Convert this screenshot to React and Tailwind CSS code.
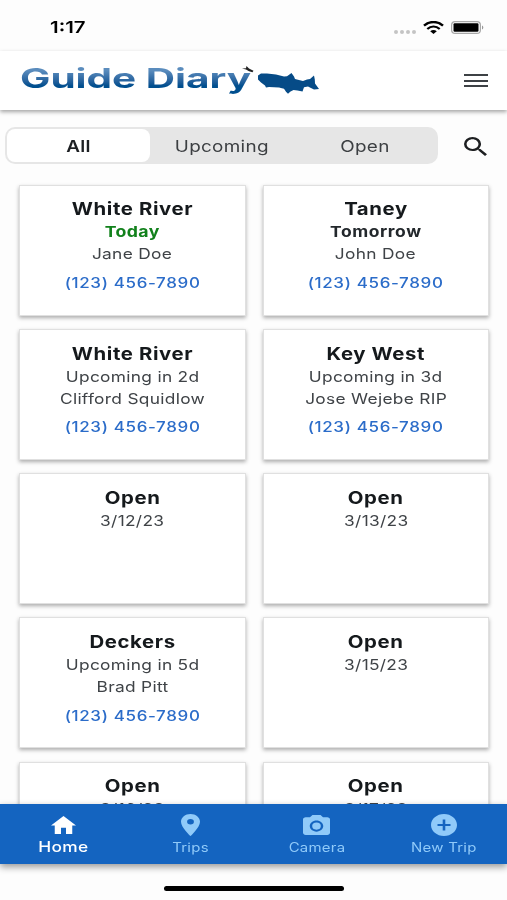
import { useState } from "react"
import clsx from "clsx"

const filters = ["All", "Upcoming", "Open"]

const trips = [
  { title: "White River", when: "Today", name: "Jane Doe", phone: "(123) 456-7890", tone: "today" },
  { title: "Taney", when: "Tomorrow", name: "John Doe", phone: "(123) 456-7890", tone: "tomorrow" },
  { title: "White River", when: "Upcoming in 2d", name: "Clifford Squidlow", phone: "(123) 456-7890" },
  { title: "Key West", when: "Upcoming in 3d", name: "Jose Wejebe RIP", phone: "(123) 456-7890" },
  { title: "Open", when: "3/12/23" },
  { title: "Open", when: "3/13/23" },
  { title: "Deckers", when: "Upcoming in 5d", name: "Brad Pitt", phone: "(123) 456-7890" },
  { title: "Open", when: "3/15/23" },
  { title: "Open", when: "3/16/23" },
  { title: "Open", when: "3/17/23" },
]

const tabs = [
  { label: "Home", box: "2 3 20 17", size: "h-[18px] w-[25px]", path: "M10 20v-6h4v6h5v-8h3L12 3 2 12h3v8z" },
  {
    label: "Trips",
    box: "5 2 14 20",
    size: "h-[22px] w-[19px]",
    path: "M12 2C8.13 2 5 5.13 5 9c0 5.25 7 13 7 13s7-7.75 7-13c0-3.87-3.13-7-7-7zm0 9.5a2.5 2.5 0 0 1 0-5 2.5 2.5 0 0 1 0 5z",
  },
  {
    label: "Camera",
    box: "2 2 20 18",
    size: "h-5 w-[27px]",
    path: "M9 2 7.17 4H4c-1.1 0-2 .9-2 2v12c0 1.1.9 2 2 2h16c1.1 0 2-.9 2-2V6c0-1.1-.9-2-2-2h-3.17L15 2H9zm3 15c-2.76 0-5-2.24-5-5s2.24-5 5-5 5 2.24 5 5-2.24 5-5 5zm0-1.8a3.2 3.2 0 1 0 0-6.4 3.2 3.2 0 0 0 0 6.4z",
  },
  {
    label: "New Trip",
    box: "2 2 20 20",
    size: "h-[22px] w-[26px]",
    path: "M12 2C6.48 2 2 6.48 2 12s4.48 10 10 10 10-4.48 10-10S17.52 2 12 2zm5 11h-4v4h-2v-4H7v-2h4V7h2v4h4v2z",
  },
]

const StatusBar = () => (
  <div className="flex h-[51px] shrink-0 items-center justify-between pt-[3px] pr-[23px] pl-[50px]">
    <span className="origin-left scale-x-[1.24] text-[16.5px] leading-none font-semibold text-black">1:17</span>
    <div className="flex items-center">
      <div className="mt-[9px] mr-[7px] flex gap-[2px]">
        {[0, 1, 2, 3].map((dot) => (
          <span key={dot} className="size-[4px] rounded-full bg-[#c4c4c4]" />
        ))}
      </div>
      <svg className="mr-[7px] h-[13px] w-[21px]" viewBox="0 0 21 13" fill="none" stroke="#000">
        <path d="M1 4.7C6.3-.2 14.7-.2 20 4.7" strokeWidth="2.4" />
        <path d="M4.3 8C8 4.7 13 4.7 16.7 8" strokeWidth="2.3" />
        <path d="M7.2 10.3c2-1.7 4.600-1.7 6.600 0L10.500 13z" fill="#000" stroke="none" />
      </svg>
      <svg className="h-[13px] w-[33px]" viewBox="0 0 33 13" fill="none">
        <rect x="0.6" y="0.6" width="28.8" height="11.8" rx="3.5" stroke="#a8a8a8" strokeWidth="1.2" />
        <rect x="2.5" y="2.3" width="25" height="8.4" rx="1.2" fill="#000" />
        <path d="M31 4.5c1.8.6 1.8 3.4 0 4z" fill="#999" />
      </svg>
    </div>
  </div>
)

const Header = () => (
  <header className="relative z-10 flex h-[59px] shrink-0 items-center justify-between bg-white pr-[19px] pl-[20px] shadow-[0_2px_4px_rgba(0,0,0,0.35)]">
    <div className="relative flex h-full items-center">
      <h1 className="w-[233px] pb-[3px] whitespace-nowrap">
        <span className="inline-block origin-left scale-x-[1.5] bg-linear-to-b from-[#5a8cbd] from-25% to-[#004f8f] to-70% bg-clip-text text-[27px] leading-[34px] font-bold text-transparent">
          Guide Diary
        </span>
      </h1>
      <svg className="absolute top-[15px] left-[222px] h-[7px] w-[12px]" viewBox="0 0 12 7">
        <path d="M0 2.5l4-.3L4.5 0l2.500 2.500 4.500 2.200-1 1.600-3.500-1-3-1.800z" fill="#222" />
      </svg>
      <svg className="mt-[4px] ml-[4px] h-[22px] w-[62px]" viewBox="0 0 62 22" fill="#064b87">
        <path d="M1 3.500 4 1.500h6l9 1 8 2 3-.2L34.500 1 37 4.500l1 2.500 5 1.300 3 .7 4-1.500 3-.5 4-3.500.8 4 .2 4 4 5.500-5 .5-6-3-4 .8-1.500 4.200-5-1-4-.5-3 1.500-2.500 2.200-2-2-2-3-5-1.200-10-.5-3 .5-1-2-4-3-3-3z" />
      </svg>
    </div>
    <button aria-label="Menu" className="flex w-6 flex-col gap-[3.500px]">
      <span className="h-[2px] w-full bg-[#3d4145]" />
      <span className="h-[2px] w-full bg-[#3d4145]" />
      <span className="h-[2px] w-full bg-[#3d4145]" />
    </button>
  </header>
)

const TripCard = ({ trip }) => (
  <div className="flex h-[131px] flex-col items-center border border-[#e0e0e0] bg-white pt-[11.7px] text-center whitespace-nowrap shadow-[0_2px_4px_rgba(0,0,0,0.32)]">
    <h2 className="scale-x-[1.18] text-[17.3px] leading-6 font-bold tracking-[0.5px] text-[#15191c]">{trip.title}</h2>
    <p
      className={clsx(
        "scale-x-[1.18] leading-[22px]",
        trip.tone === "today" && "text-[15px] font-bold tracking-[0.3px] text-[#11811b]",
        trip.tone === "tomorrow" && "text-[14.8px] font-bold tracking-[0.5px] text-[#23282c]",
        !trip.tone && "text-[14.7px] tracking-[0.25px] text-[#3f4347]",
      )}
    >
      {trip.when}
    </p>
    {trip.name && <p className="scale-x-[1.18] text-[14.7px] leading-[23px] tracking-[0.25px] text-[#3f4347]">{trip.name}</p>}
    {trip.phone && (
      <a href="tel:1234567890" className="mt-[4.500px] scale-x-[1.18] text-[14.4px] leading-[23px] font-medium tracking-[0.55px] text-[#2b6cc9]">
        {trip.phone}
      </a>
    )}
  </div>
)

const App = () => {
  const [filter, setFilter] = useState("All")
  const [tab, setTab] = useState("Home")

  return (
    <div className="flex h-[900px] w-full flex-col overflow-hidden bg-[#fdfdfd] font-['Inter',sans-serif]">
      <StatusBar />
      <Header />
      <main className="min-h-0 flex-1 overflow-hidden">
        <div className="flex items-center pt-[17px] pl-[5px]">
          <div className="flex h-[37px] w-[433px] rounded-[10px] bg-[#e6e6e6] p-[2px]">
            {filters.map((item) => (
              <button
                key={item}
                onClick={() => setFilter(item)}
                className={clsx(
                  "flex flex-1 items-center justify-center rounded-[8px]",
                  filter === item ? "bg-white font-semibold text-[#1d2023]" : "text-[#3c3f42]",
                )}
              >
                <span className="scale-x-[1.18] text-[16px] tracking-[0.25px]">{item}</span>
              </button>
            ))}
          </div>
          <button aria-label="Search" className="mt-px ml-[26px]">
            <svg className="h-[19px] w-[23px]" viewBox="3 3 17.5 17.5" preserveAspectRatio="none" fill="#1d1f21">
              <path d="M15.5 14h-.79l-.28-.27A6.471 6.471 0 0 0 16 9.5 6.5 6.5 0 1 0 9.5 16c1.61 0 3.09-.59 4.23-1.57l.27.28v.79l5 4.99L20.49 19l-4.99-5zm-6 0C7.01 14 5 11.99 5 9.5S7.01 5 9.5 5 14 7.01 14 9.5 11.99 14 9.5 14z" />
            </svg>
          </button>
        </div>
        <div className="mt-[20.8px] grid grid-cols-2 gap-x-[17px] gap-y-[13.2px] pr-[18px] pl-[19px]">
          {trips.map((trip, i) => (
            <TripCard key={i} trip={trip} />
          ))}
        </div>
      </main>
      <nav className="relative z-10 grid h-[60px] shrink-0 grid-cols-4 bg-[#1464c0] shadow-[0_3px_7px_rgba(0,0,0,0.4)]">
        {tabs.map(({ label, box, size, path }) => (
          <button
            key={label}
            onClick={() => setTab(label)}
            className={clsx("flex flex-col items-center pt-[10px]", tab === label ? "text-white" : "text-[#90caf9]")}
          >
            <span className="flex h-[22px] items-center">
              <svg className={size} viewBox={box} preserveAspectRatio="none" fill="currentColor" fillRule="evenodd">
                <path d={path} />
              </svg>
            </span>
            <span
              className={clsx(
                "scale-x-[1.18] whitespace-nowrap",
                tab === label
                  ? "text-[14.7px] leading-[22px] font-medium tracking-[0.3px]"
                  : "text-[12.7px] leading-6 tracking-[0.2px]",
              )}
            >
              {label}
            </span>
          </button>
        ))}
      </nav>
      <div className="flex h-9 shrink-0 justify-center pt-[22px]">
        <span className="h-[5px] w-[180px] rounded-full bg-black" />
      </div>
    </div>
  )
}

export default App
